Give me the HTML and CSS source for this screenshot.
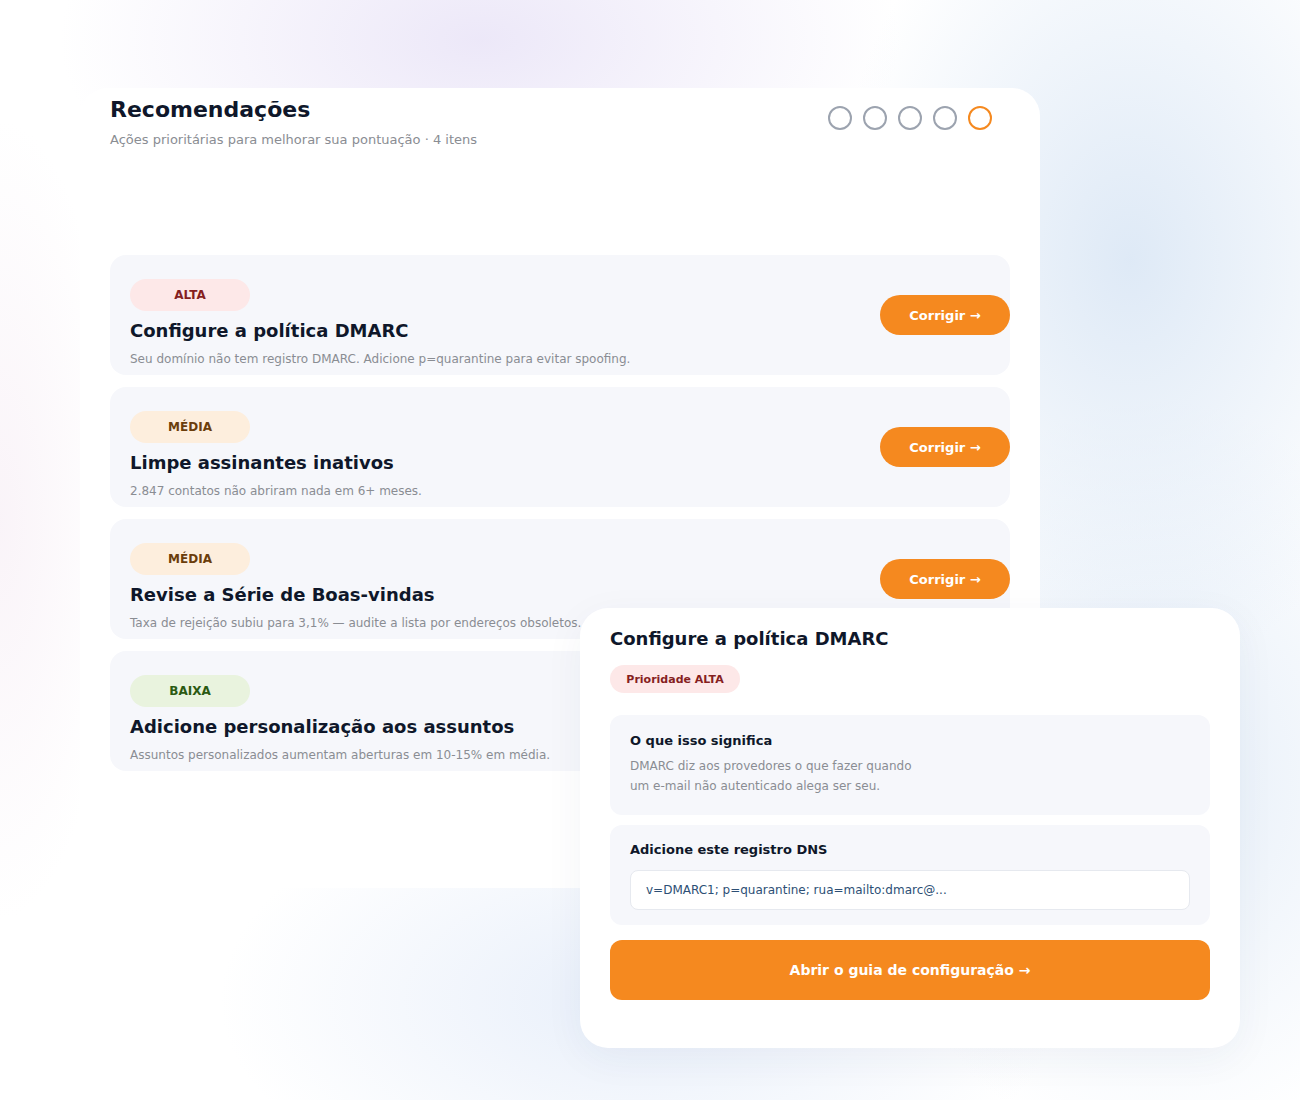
FILE: index.html
```html
<!DOCTYPE html>
<html lang="pt-BR">
<head>
    <meta charset="UTF-8">
    <meta name="viewport" content="width=device-width, initial-scale=1.0">
    <title>Recomendações</title>
    <link rel="stylesheet" href="styles.css">
</head>
<body>
    <div class="stage">
        <section class="panel">
            <header class="panel-head">
                <div>
                    <h1 class="panel-title">Recomendações</h1>
                    <p class="panel-sub">Ações prioritárias para melhorar sua pontuação · 4 itens</p>
                </div>
                <div class="steps">
                    <span class="step"></span>
                    <span class="step"></span>
                    <span class="step"></span>
                    <span class="step"></span>
                    <span class="step active"></span>
                </div>
            </header>

            <div class="rec-list">
                <div class="rec">
                    <div class="rec-body">
                        <span class="tag tag-high">ALTA</span>
                        <h2 class="rec-title">Configure a política DMARC</h2>
                        <p class="rec-desc">Seu domínio não tem registro DMARC. Adicione p=quarantine para evitar spoofing.</p>
                    </div>
                    <button class="fix-btn">Corrigir →</button>
                </div>
                <div class="rec">
                    <div class="rec-body">
                        <span class="tag tag-mid">MÉDIA</span>
                        <h2 class="rec-title">Limpe assinantes inativos</h2>
                        <p class="rec-desc">2.847 contatos não abriram nada em 6+ meses.</p>
                    </div>
                    <button class="fix-btn">Corrigir →</button>
                </div>
                <div class="rec">
                    <div class="rec-body">
                        <span class="tag tag-mid">MÉDIA</span>
                        <h2 class="rec-title">Revise a Série de Boas-vindas</h2>
                        <p class="rec-desc">Taxa de rejeição subiu para 3,1% — audite a lista por endereços obsoletos.</p>
                    </div>
                    <button class="fix-btn">Corrigir →</button>
                </div>
                <div class="rec">
                    <div class="rec-body">
                        <span class="tag tag-low">BAIXA</span>
                        <h2 class="rec-title">Adicione personalização aos assuntos</h2>
                        <p class="rec-desc">Assuntos personalizados aumentam aberturas em 10-15% em média.</p>
                    </div>
                    <button class="fix-btn">Corrigir →</button>
                </div>
            </div>
        </section>

        <aside class="detail">
            <h2 class="detail-title">Configure a política DMARC</h2>
            <span class="tag tag-high tag-small">Prioridade ALTA</span>

            <div class="info-box">
                <h3 class="info-head">O que isso significa</h3>
                <p class="info-text">DMARC diz aos provedores o que fazer quando<br>um e-mail não autenticado alega ser seu.</p>
            </div>

            <div class="info-box dns-box">
                <h3 class="info-head">Adicione este registro DNS</h3>
                <div class="dns-record">v=DMARC1; p=quarantine; rua=mailto:dmarc@...</div>
            </div>

            <button class="guide-btn">Abrir o guia de configuração →</button>
        </aside>
    </div>
</body>
</html>
```

FILE: styles.css
```css
* {
    box-sizing: border-box;
}
body {
    margin: 0;
    font-family: "DejaVu Sans", Verdana, sans-serif;
    color: #0f172a;
    background-color: #ffffff;
}
.stage {
    position: relative;
    width: 1300px;
    height: 1100px;
    overflow: hidden;
    padding: 88px 0 0 80px;
    background:
        radial-gradient(ellipse 420px 220px at 480px 40px, rgba(230, 224, 246, 0.75), rgba(230, 224, 246, 0) 100%),
        radial-gradient(ellipse 300px 420px at 1130px 260px, rgba(214, 228, 244, 0.8), rgba(214, 228, 244, 0) 100%),
        radial-gradient(ellipse 300px 380px at 1160px 780px, rgba(220, 232, 246, 0.75), rgba(220, 232, 246, 0) 100%),
        radial-gradient(ellipse 420px 220px at 640px 1000px, rgba(222, 232, 248, 0.7), rgba(222, 232, 248, 0) 100%),
        radial-gradient(ellipse 120px 400px at 0px 520px, rgba(246, 236, 244, 0.6), rgba(246, 236, 244, 0) 100%),
        #ffffff;
}

/* main panel */
.panel {
    width: 960px;
    height: 800px;
    background: #ffffff;
    border-radius: 28px;
    padding: 8px 30px 0 30px;
}
.panel-head {
    display: flex;
    justify-content: space-between;
    align-items: flex-start;
}
.panel-title {
    margin: 0;
    font-size: 22px;
    line-height: 28px;
    font-weight: bold;
}
.panel-sub {
    margin: 7px 0 0;
    font-size: 13px;
    line-height: 18px;
    color: #8a8d93;
}
.steps {
    display: flex;
    gap: 11px;
    margin: 10px 18px 0 0;
}
.step {
    width: 24px;
    height: 24px;
    border-radius: 50%;
    border: 2px solid #9ca3af;
}
.step.active {
    border-color: #f5891f;
}

.rec-list {
    display: flex;
    flex-direction: column;
    gap: 12px;
    margin-top: 106px;
}
.rec {
    display: flex;
    align-items: center;
    justify-content: space-between;
    height: 120px;
    background: #f6f7fb;
    border-radius: 16px;
    padding-left: 20px;
}
.rec-body {
    align-self: flex-start;
    padding-top: 24px;
}
.tag {
    display: inline-flex;
    align-items: center;
    justify-content: center;
    width: 120px;
    height: 32px;
    border-radius: 16px;
    font-size: 12px;
    font-weight: bold;
}
.tag-high {
    background: #fde8e8;
    color: #861f1f;
}
.tag-mid {
    background: #fdeedd;
    color: #6b3d0b;
}
.tag-low {
    background: #e9f3de;
    color: #2b5a12;
}
.rec-title {
    margin: 8px 0 0;
    font-size: 18px;
    line-height: 24px;
    font-weight: bold;
}
.rec-desc {
    margin: 7px 0 0;
    font-size: 12px;
    line-height: 18px;
    color: #8a8d93;
}
.fix-btn {
    width: 130px;
    height: 40px;
    border: none;
    border-radius: 20px;
    background: #f5891f;
    color: #ffffff;
    font-family: inherit;
    font-size: 13px;
    font-weight: bold;
    cursor: pointer;
}

/* detail card sitting over the list */
.detail {
    position: absolute;
    left: 580px;
    top: 608px;
    width: 660px;
    height: 440px;
    background: #ffffff;
    border-radius: 28px;
    padding: 19px 30px 0 30px;
    box-shadow: 0 10px 40px rgba(30, 50, 90, 0.05);
}
.detail-title {
    margin: 0;
    font-size: 18px;
    line-height: 24px;
    font-weight: bold;
}
.tag-small {
    width: 130px;
    height: 28px;
    border-radius: 14px;
    font-size: 11px;
    margin-top: 14px;
}
.info-box {
    background: #f6f7fb;
    border-radius: 12px;
    height: 100px;
    padding: 17px 20px 0 20px;
    margin-top: 22px;
}
.dns-box {
    margin-top: 10px;
    padding-top: 16px;
}
.info-head {
    margin: 0;
    font-size: 13px;
    line-height: 18px;
    font-weight: bold;
}
.info-text {
    margin: 6px 0 0;
    font-size: 12px;
    line-height: 20px;
    color: #8a8d93;
}
.dns-record {
    margin-top: 11px;
    height: 40px;
    background: #ffffff;
    border: 1px solid #e6e9ef;
    border-radius: 8px;
    padding: 0 15px;
    display: flex;
    align-items: center;
    font-size: 12px;
    color: #2d4f75;
}
.guide-btn {
    display: block;
    width: 100%;
    height: 60px;
    margin-top: 15px;
    border: none;
    border-radius: 12px;
    background: #f5891f;
    color: #ffffff;
    font-family: inherit;
    font-size: 14px;
    font-weight: bold;
    cursor: pointer;
}
```
